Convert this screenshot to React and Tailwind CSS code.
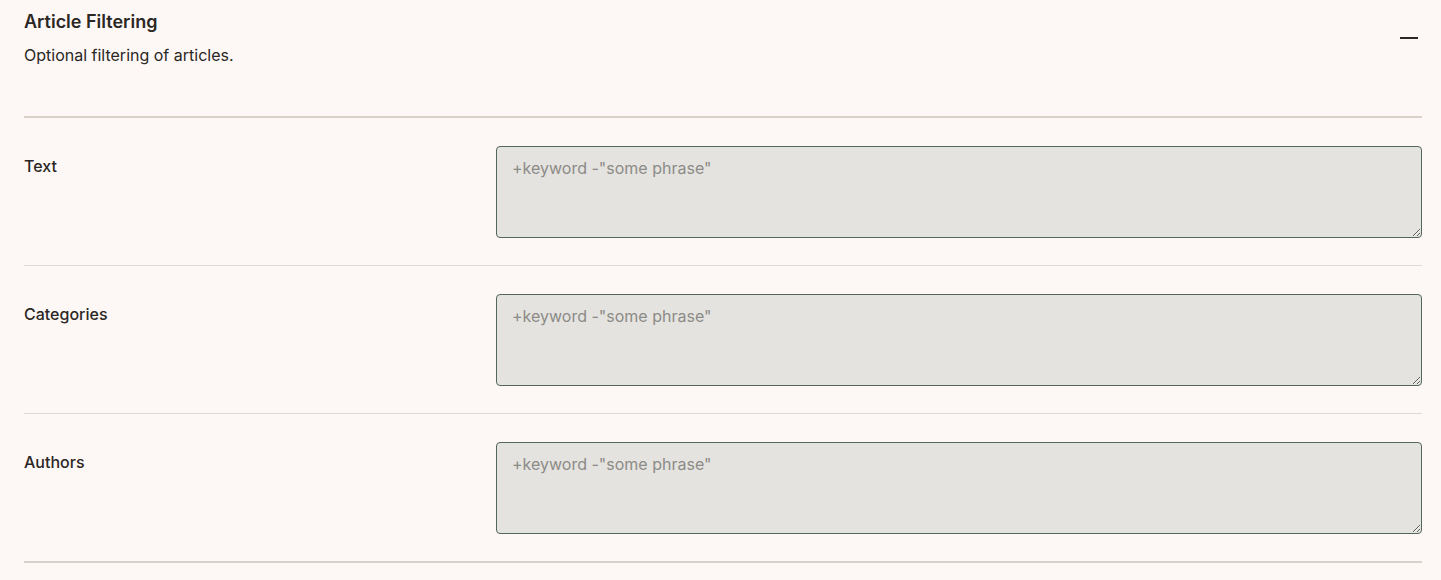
import React from "react";

const font = { fontFamily: "Inter, 'Noto Sans', sans-serif" };

function Row({ label, last }) {
  return (
    <div className={`flex pt-[28px] pb-[27px] ${last ? "border-b-2 border-[#d6d2cd]" : "border-b border-[#dedad5]"}`}>
      <div className="w-[472px] shrink-0 pt-[10px] text-[16px] font-medium leading-[20px] text-[#2b2724]">{label}</div>
      <textarea
        className="flex-1 h-[92px] rounded-[4px] border border-[#55665a] bg-[#e4e3df] pl-[15px] pr-[15px] pt-[9px] pb-[10px] text-[16px] leading-[24px] text-[#2b2724] placeholder:text-[#8c8b87] outline-none"
        placeholder={'+keyword -"some phrase"'}
        style={font}
      />
    </div>
  );
}

export default function App() {
  return (
    <div className="min-h-[580px] bg-[#fdf8f6] pl-6 pr-[19px]" style={font}>
      <div className="flex items-start justify-between pt-[10px] pb-[50px] border-b-2 border-[#d8d2c8]">
        <div>
          <h2 className="text-[18px] font-semibold leading-[24px] text-[#2b2724]">Article Filtering</h2>
          <p className="mt-[10px] text-[16px] leading-[22px] text-[#2b2724]">Optional filtering of articles.</p>
        </div>
        <div className="mt-[27px] mr-[4px] h-[2px] w-[18px] bg-[#2b2724]" />
      </div>
      <Row label="Text" />
      <Row label="Categories" />
      <Row label="Authors" last />
    </div>
  );
}
